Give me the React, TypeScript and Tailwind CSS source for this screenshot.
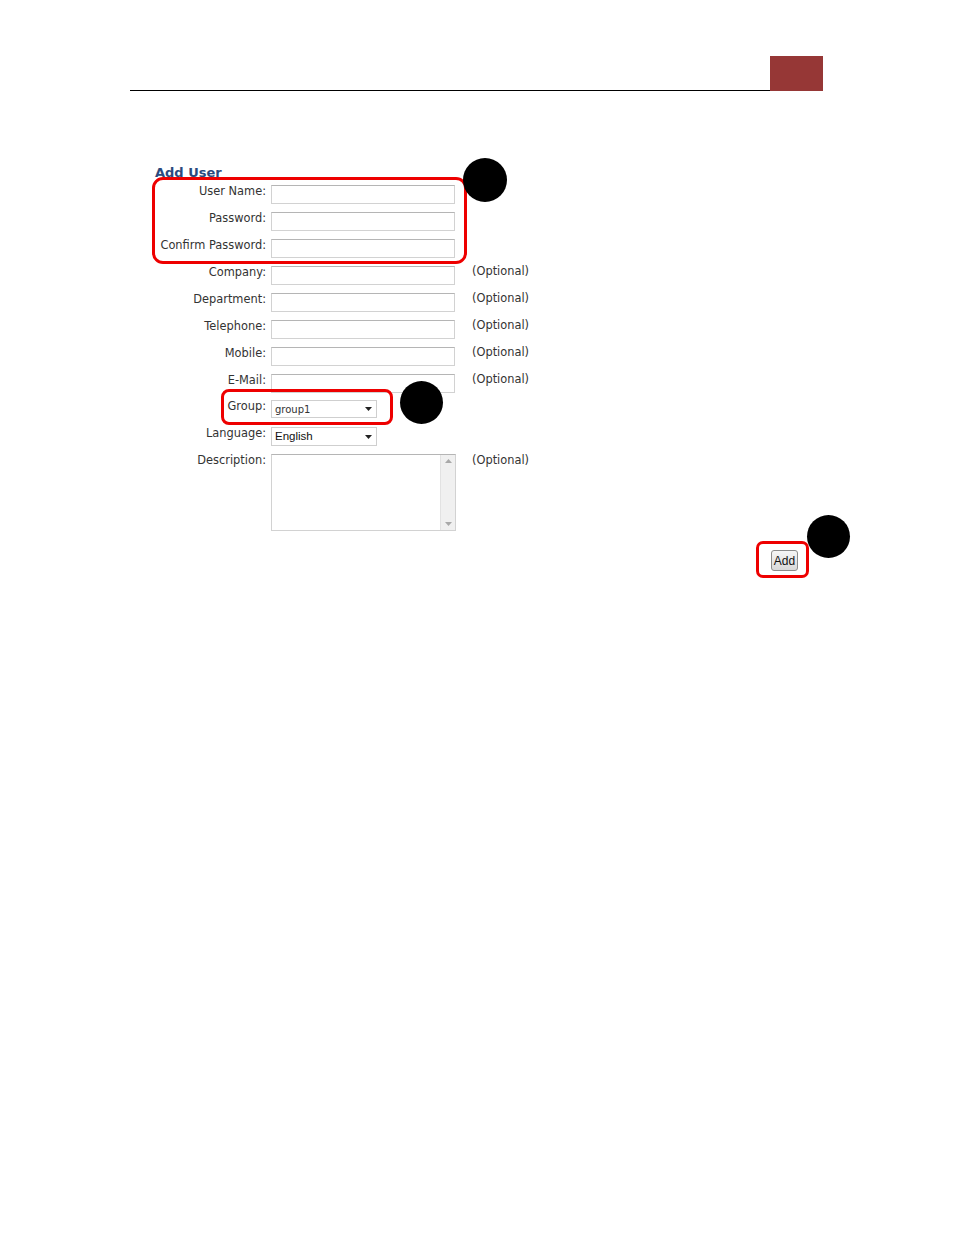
import React from "react";

const rows = [
  { label: "User Name:", optional: false },
  { label: "Password:", optional: false },
  { label: "Confirm Password:", optional: false },
  { label: "Company:", optional: true },
  { label: "Department:", optional: true },
  { label: "Telephone:", optional: true },
  { label: "Mobile:", optional: true },
  { label: "E-Mail:", optional: true },
];

function Caret() {
  return (
    <svg width="7" height="4" viewBox="0 0 7 4" className="shrink-0">
      <path d="M0 0h7L3.5 4z" fill="#222" />
    </svg>
  );
}

export default function App() {
  return (
    <div className="relative w-[954px] h-[1235px] bg-white font-['DejaVu_Sans',Verdana,sans-serif] text-[11.4px] text-[#333]">
      {/* page header */}
      <div className="pt-[56px] pl-[130px] flex items-end w-[823px]">
        <div className="flex-1 border-b-[1.5px] border-black" />
        <div className="w-[53px] h-[35px] bg-[#963736]" />
      </div>

      {/* form */}
      <div className="mt-[74px] pl-[155px]">
        <h2 className="text-[13px] leading-[16px] font-bold text-[#2b4a7e]">Add User</h2>
        <div className="mt-[4px] -ml-[5px] flex flex-col">
          {rows.map((r) => (
            <div key={r.label} className="h-[27px] flex items-start">
              <div className="w-[116px] text-right leading-[13px]">{r.label}</div>
              <div className="ml-[5px] w-[184px] h-[19px] border border-[#d2d2d2] border-t-[#b5b5b5] bg-white" />
              {r.optional && <div className="ml-[17px] -mt-[1px] leading-[13px]">(Optional)</div>}
            </div>
          ))}
          <div className="h-[27px] flex items-start">
            <div className="w-[116px] text-right leading-[13px] -mt-[1px]">Group:</div>
            <div className="ml-[5px] mt-[-1px] w-[106px] h-[18px] border border-[#cfcfcf] flex items-center justify-between pl-[3px] pr-[4px]">
              <span className="text-[10px]">group1</span>
              <Caret />
            </div>
          </div>
          <div className="h-[27px] flex items-start">
            <div className="w-[116px] text-right leading-[13px] -mt-[1px]">Language:</div>
            <div className="ml-[5px] -mt-[1px] w-[106px] h-[19px] border border-[#cfcfcf] flex items-center justify-between pl-[3px] pr-[4px]">
              <span className="text-[11.5px] text-[#111] font-['Liberation_Sans',Arial,sans-serif]">English</span>
              <Caret />
            </div>
          </div>
          <div className="flex items-start -mt-[1px]">
            <div className="w-[116px] text-right leading-[13px]">Description:</div>
            <div className="ml-[5px] w-[185px] h-[77px] border border-[#d2d2d2] border-t-[#b5b5b5] flex justify-end">
              <div className="w-[15px] h-full bg-[#f0f0f0] border-l border-[#e2e2e2] flex flex-col items-center justify-between py-[4px]">
                <svg width="7" height="4" viewBox="0 0 7 4">
                  <path d="M0 4h7L3.5 0z" fill="#a9a9a9" />
                </svg>
                <svg width="7" height="4" viewBox="0 0 7 4">
                  <path d="M0 0h7L3.5 4z" fill="#a9a9a9" />
                </svg>
              </div>
            </div>
            <div className="ml-[16px] leading-[13px]">(Optional)</div>
          </div>
        </div>
        <div className="w-[643px] flex justify-end mt-[19px]">
          <button className="w-[27px] h-[21px] rounded-[3px] border border-[#8c8c8c] bg-gradient-to-b from-[#f6f6f6] to-[#d8d8d8] text-[12px] leading-none text-[#111] font-['Liberation_Sans',Arial,sans-serif]">
            Add
          </button>
        </div>
      </div>

      {/* callouts */}
      <div className="absolute left-[152px] top-[177px] w-[315px] h-[87px] border-[3px] border-[#ee0000] rounded-[11px]" />
      <div className="absolute left-[463px] top-[158px] w-[44px] h-[44px] rounded-full bg-black" />
      <div className="absolute left-[221px] top-[389px] w-[172px] h-[36px] border-[3px] border-[#ee0000] rounded-[8px]" />
      <div className="absolute left-[400px] top-[381px] w-[43px] h-[43px] rounded-full bg-black" />
      <div className="absolute left-[756px] top-[541px] w-[53px] h-[37px] border-[3px] border-[#ee0000] rounded-[7px]" />
      <div className="absolute left-[807px] top-[515px] w-[43px] h-[43px] rounded-full bg-black" />
    </div>
  );
}
